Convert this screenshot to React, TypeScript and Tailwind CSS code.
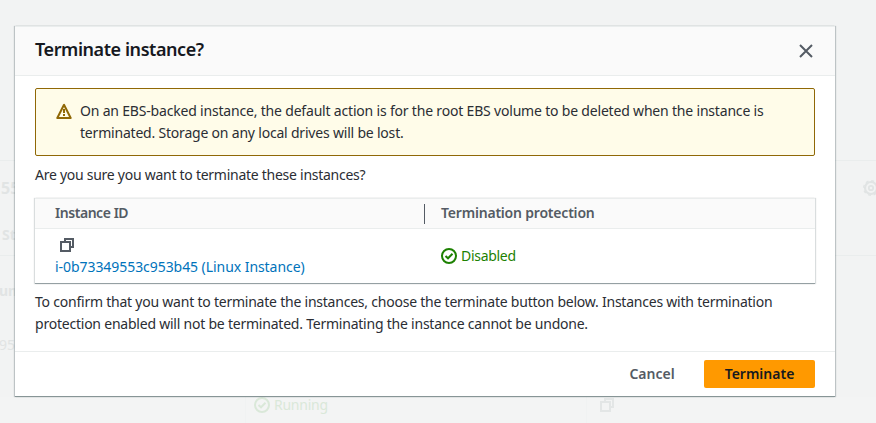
import React from "react";

type IconProps = { className?: string };

function CopyIcon({ className }: IconProps) {
  return (
    <svg viewBox="0 0 16 16" className={className} fill="none" stroke="currentColor" strokeWidth="2" aria-hidden="true">
      <path d="M2 5h9v9H2z" />
      <path d="M6 5V2h8v8h-3" />
    </svg>
  );
}

function CheckCircleIcon({ className }: IconProps) {
  return (
    <svg viewBox="0 0 16 16" className={className} fill="none" stroke="currentColor" strokeWidth="2" aria-hidden="true">
      <circle cx="8" cy="8" r="7" />
      <path d="M4.5 8 7 10.3l4.5-4.6" />
    </svg>
  );
}

function WarningIcon({ className }: IconProps) {
  return (
    <svg viewBox="0 0 16 16" className={className} fill="none" stroke="currentColor" strokeWidth="2" aria-hidden="true">
      <path d="M8 1.8 1.3 15h13.4L8 1.8Z" strokeLinejoin="round" />
      <path d="M8 6v4M8 11v2" />
    </svg>
  );
}

function CloseIcon({ className }: IconProps) {
  return (
    <svg viewBox="0 0 16 16" className={className} fill="none" stroke="currentColor" strokeWidth="2" aria-hidden="true">
      <path d="m2 2 12 12M14 2 2 14" />
    </svg>
  );
}

function GearIcon({ className }: IconProps) {
  return (
    <svg viewBox="0 0 16 16" className={className} fill="none" stroke="currentColor" aria-hidden="true">
      <circle cx="8" cy="8" r="6" strokeWidth="2.2" />
      <circle cx="8" cy="8" r="7.3" strokeWidth="1.4" strokeDasharray="2.9 2.833" />
      <circle cx="8" cy="8" r="2.2" strokeWidth="1.8" />
    </svg>
  );
}

function Backdrop() {
  return (
    <div className="flex h-full flex-col bg-[#f2f3f3] text-sm leading-[22px] text-[#e1e4e4]" aria-hidden="true">
      <div className="h-40" />
      <div className="flex h-24 flex-col border-y border-[#eaeded]">
        <div className="flex items-center justify-between pt-4 pl-px">
          <span className="text-base leading-[22px] font-bold">55</span>
          <GearIcon className="-mr-[3px] size-4 shrink-0" />
        </div>
        <div className="flex pt-[25px] pl-[2px]">
          <span className="font-bold">St</span>
        </div>
      </div>
      <div className="flex h-[141px] flex-col pt-6">
        <span className="-ml-px font-bold">um</span>
        <span className="mt-8 -ml-px">95</span>
      </div>
      <div className="flex grow bg-[#f3f4f4]">
        <div className="w-[246px] border-r border-[#f0f2f2]" />
        <div className="flex w-[341px] gap-1 border-r border-[#f0f2f2] pl-2 text-[#dae8d9]">
          <CheckCircleIcon className="size-4" />
          <span className="-mt-[3px] tracking-[-0.25px]">Running</span>
        </div>
        <CopyIcon className="ml-3 size-4 text-[#e3e6e6]" />
      </div>
    </div>
  );
}

function InstanceTable() {
  return (
    <div className="mt-3 flex h-[86px] flex-col border-t border-b border-t-[#eaeded] border-b-[#95a0a3] bg-white shadow-[1px_0_1px_0_rgba(0,28,36,0.15),-1px_0_1px_0_rgba(0,28,36,0.15)]">
      <div className="flex h-[30px] shrink-0 items-center border-b border-[#eaeded] bg-[#fafafa] font-semibold text-[#545b64]">
        <div className="flex h-5 w-[390px] items-center border-r border-[#545b64] pb-0.5 pl-5">
          <span className="tracking-[-0.45px]">Instance ID</span>
        </div>
        <div className="pb-0.5 pl-4">
          <span className="tracking-[-0.2px]">Termination protection</span>
        </div>
      </div>
      <div className="flex grow items-center">
        <div className="flex w-[390px] flex-col pl-5">
          <CopyIcon className="mt-0.5 ml-1 size-4 text-[#545b64]" />
          <a className="mt-[3px] whitespace-nowrap text-[#0073bb]">
            <span className="tracking-[-0.06px]">i-0b73349553c953b45 (Linux Instance)</span>
          </a>
        </div>
        <div className="flex items-center gap-1 pl-4 text-[#1d8102]">
          <CheckCircleIcon className="size-4" />
          <span className="tracking-[-0.3px]">Disabled</span>
        </div>
      </div>
    </div>
  );
}

function TerminateDialog() {
  return (
    <div
      role="dialog"
      className="absolute top-[26px] left-[15px] flex h-[371px] w-[820px] flex-col border-t border-b border-t-[#eaeded] border-b-[#879596] bg-white shadow-[1px_0_1px_0_rgba(0,28,36,0.22),-1px_0_1px_0_rgba(0,28,36,0.22)]"
    >
      <header className="flex h-[49px] shrink-0 items-center justify-between border-b border-[#eaeded] bg-[#fafafa] px-5">
        <h2 className="pb-1 text-lg leading-[22px] font-semibold text-[#16191f]">
          <span className="tracking-[-0.43px]">Terminate instance?</span>
        </h2>
        <CloseIcon className="mr-px size-4 text-[#545b64]" />
      </header>
      <div className="flex grow flex-col px-5 pt-3 text-sm leading-[22px] whitespace-nowrap text-[#2b2e34]">
        <div className="flex h-[68px] gap-2 rounded-[2px] border border-[#906806] bg-[#fffce9] py-[11px] pl-5">
          <WarningIcon className="mt-[3px] size-4 shrink-0 text-[#906806]" />
          <p>
            <span className="tracking-[-0.188px]">On an EBS-backed instance, the default action is for the root EBS volume to be deleted when the instance is</span>
            <br />
            <span className="tracking-[-0.2px]">terminated. Storage on any local drives will be lost.</span>
          </p>
        </div>
        <p className="mt-2">
          <span className="tracking-[-0.265px]">Are you sure you want to terminate these instances?</span>
        </p>
        <InstanceTable />
        <p className="mt-[7px]">
          <span className="tracking-[-0.226px]">To confirm that you want to terminate the instances, choose the terminate button below. Instances with termination</span>
          <br />
          <span className="tracking-[-0.224px]">protection enabled will not be terminated. Terminating the instance cannot be undone.</span>
        </p>
      </div>
      <footer className="flex h-[45px] shrink-0 items-start justify-end gap-[9px] border-t border-[#eaeded] px-5 pt-2 text-sm leading-[22px] font-semibold">
        <button className="h-7 w-[86px] text-[#545b64]">
          <span>Cancel</span>
        </button>
        <button className="h-7 w-[111px] rounded-[2px] bg-[#ff9900] text-[#16191f]">
          <span>Terminate</span>
        </button>
      </footer>
    </div>
  );
}

export default function App() {
  return (
    <div className="relative h-[423px] w-[876px] overflow-hidden font-['Noto_Sans',sans-serif]">
      <Backdrop />
      <TerminateDialog />
    </div>
  );
}
